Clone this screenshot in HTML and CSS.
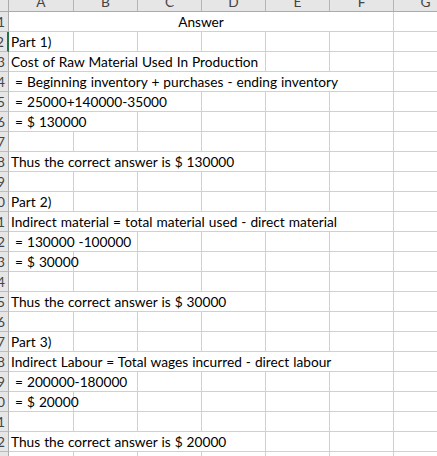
FILE: index.html
```html
<!DOCTYPE html>
<html>
<head>
<meta charset="utf-8">
<link rel="stylesheet" href="styles.css">
</head>
<body>
<div class="viewport">
<div class="sheet">
  <div class="corner"></div>
  <div class="ch">A</div><div class="ch">B</div><div class="ch">C</div><div class="ch">D</div><div class="ch">E</div><div class="ch">F</div><div class="ch">G</div>
  <div class="rh"><span>1</span></div><div class="c s6 center">Answer</div><div class="c"></div>
  <div class="rh active"><span>2</span></div><div class="c">Part 1)</div><div class="c"></div><div class="c"></div><div class="c"></div><div class="c"></div><div class="c"></div><div class="c"></div>
  <div class="rh"><span>3</span></div><div class="c s4">Cost of Raw Material Used In Production</div><div class="c"></div><div class="c"></div><div class="c"></div>
  <div class="rh"><span>4</span></div><div class="c s6"> = Beginning inventory + purchases - ending inventory</div><div class="c"></div>
  <div class="rh"><span>5</span></div><div class="c s3"> = 25000+140000-35000</div><div class="c"></div><div class="c"></div><div class="c"></div><div class="c"></div>
  <div class="rh"><span>6</span></div><div class="c s2"> = $ 130000</div><div class="c"></div><div class="c"></div><div class="c"></div><div class="c"></div><div class="c"></div>
  <div class="rh"><span>7</span></div><div class="c"></div><div class="c"></div><div class="c"></div><div class="c"></div><div class="c"></div><div class="c"></div><div class="c"></div>
  <div class="rh"><span>8</span></div><div class="c s4">Thus the correct answer is $ 130000</div><div class="c"></div><div class="c"></div><div class="c"></div>
  <div class="rh"><span>9</span></div><div class="c"></div><div class="c"></div><div class="c"></div><div class="c"></div><div class="c"></div><div class="c"></div><div class="c"></div>
  <div class="rh"><span>10</span></div><div class="c">Part 2)</div><div class="c"></div><div class="c"></div><div class="c"></div><div class="c"></div><div class="c"></div><div class="c"></div>
  <div class="rh"><span>11</span></div><div class="c s6">Indirect material = total material used - direct material</div><div class="c"></div>
  <div class="rh"><span>12</span></div><div class="c s2"> = 130000 -100000</div><div class="c"></div><div class="c"></div><div class="c"></div><div class="c"></div><div class="c"></div>
  <div class="rh"><span>13</span></div><div class="c"> = $ 30000</div><div class="c"></div><div class="c"></div><div class="c"></div><div class="c"></div><div class="c"></div><div class="c"></div>
  <div class="rh"><span>14</span></div><div class="c"></div><div class="c"></div><div class="c"></div><div class="c"></div><div class="c"></div><div class="c"></div><div class="c"></div>
  <div class="rh"><span>15</span></div><div class="c s4">Thus the correct answer is $ 30000</div><div class="c"></div><div class="c"></div><div class="c"></div>
  <div class="rh"><span>16</span></div><div class="c"></div><div class="c"></div><div class="c"></div><div class="c"></div><div class="c"></div><div class="c"></div><div class="c"></div>
  <div class="rh"><span>17</span></div><div class="c">Part 3)</div><div class="c"></div><div class="c"></div><div class="c"></div><div class="c"></div><div class="c"></div><div class="c"></div>
  <div class="rh"><span>18</span></div><div class="c s6">Indirect Labour = Total wages incurred - direct labour</div><div class="c"></div>
  <div class="rh"><span>19</span></div><div class="c s2"> = 200000-180000</div><div class="c"></div><div class="c"></div><div class="c"></div><div class="c"></div><div class="c"></div>
  <div class="rh"><span>20</span></div><div class="c"> = $ 20000</div><div class="c"></div><div class="c"></div><div class="c"></div><div class="c"></div><div class="c"></div><div class="c"></div>
  <div class="rh"><span>21</span></div><div class="c"></div><div class="c"></div><div class="c"></div><div class="c"></div><div class="c"></div><div class="c"></div><div class="c"></div>
  <div class="rh"><span>22</span></div><div class="c s4">Thus the correct answer is $ 20000</div><div class="c"></div><div class="c"></div><div class="c"></div>
  <div class="rh"><span>23</span></div><div class="c"></div><div class="c"></div><div class="c"></div><div class="c"></div><div class="c"></div><div class="c"></div><div class="c"></div>
</div>
</div>
</body>
</html>
```

FILE: styles.css
```css
body {
  margin: 0;
  background: #ffffff;
}

.viewport {
  width: 437px;
  height: 456px;
  overflow: hidden;
}

.sheet {
  display: grid;
  grid-template-columns: 9px 65px 64px 64px 64px 64px 64px 64px;
  grid-template-rows: 12px repeat(23, 20px);
  font-family: Lato, "Open Sans", sans-serif;
  font-size: 13.7px;
  word-spacing: 0.5px;
  color: #000000;
  width: 458px;
}

.corner {
  background-color: #e6e6e6;
  border-right: 1px solid #ababab;
  border-bottom: 1px solid #ababab;
  box-sizing: border-box;
}

.ch {
  background-color: #e6e6e6;
  border-right: 1px solid #b4b4b4;
  border-bottom: 1px solid #ababab;
  box-sizing: border-box;
  display: flex;
  align-items: flex-end;
  justify-content: center;
  overflow: hidden;
  color: #444444;
  line-height: 15px;
  padding-bottom: 2px;
}

.rh {
  background-color: #e6e6e6;
  border-right: 1px solid #ababab;
  border-bottom: 1px solid #bcbcbc;
  box-sizing: border-box;
  display: flex;
  justify-content: flex-end;
  align-items: flex-end;
  overflow: hidden;
  color: #444444;
  line-height: 19px;
  padding-right: 3px;
}

.rh.active {
  border-right: 2px solid #217346;
}

.c {
  border-right: 1px solid #d0d0d0;
  border-bottom: 1px solid #d0d0d0;
  box-sizing: border-box;
  white-space: pre;
  line-height: 19px;
  padding-left: 2px;
  display: flex;
  align-items: flex-end;
}

.center { justify-content: center; padding-left: 0; }
.s2 { grid-column: span 2; }
.s3 { grid-column: span 3; }
.s4 { grid-column: span 4; }
.s6 { grid-column: span 6; }
```
